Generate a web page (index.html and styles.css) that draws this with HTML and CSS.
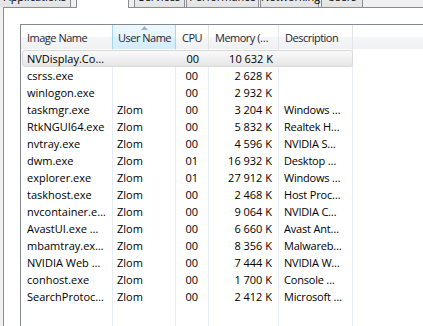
FILE: index.html
```html
<!DOCTYPE html>
<html lang="en">
<head>
    <meta charset="UTF-8">
    <meta name="viewport" content="width=device-width, initial-scale=1.0">
    <title>Windows Task Manager - Processes</title>
    <link rel="stylesheet" href="styles.css">
</head>
<body>
    <div class="tabs">
        <div class="tab tab-apps">Applications</div>
        <div class="tab tab-procs active">Processes</div>
        <div class="tab tab-services">Services</div>
        <div class="tab tab-perf">Performance</div>
        <div class="tab tab-net">Networking</div>
        <div class="tab tab-users">Users</div>
    </div>

    <div class="panel">
        <div class="list">
            <div class="list-head">
                <div class="col-head c-name">Image Name</div>
                <div class="col-head c-user sorted">
                    <svg class="sort-arrow" width="7" height="4" viewBox="0 0 7 4">
                        <path d="M0 4 L3.5 0 L7 4 Z" fill="#9fb3c9"/>
                    </svg>
                    User Name
                </div>
                <div class="col-head c-cpu">CPU</div>
                <div class="col-head c-mem">Memory (…</div>
                <div class="col-head c-desc">Description</div>
                <div class="col-head c-fill"></div>
            </div>

            <div class="list-body">
                <div class="row selected"><span>NVDisplay.Co…</span><span></span><span class="num">00</span><span class="num">10 632 K</span><span></span></div>
                <div class="row"><span>csrss.exe</span><span></span><span class="num">00</span><span class="num">2 628 K</span><span></span></div>
                <div class="row"><span>winlogon.exe</span><span></span><span class="num">00</span><span class="num">2 932 K</span><span></span></div>
                <div class="row"><span>taskmgr.exe</span><span>Zlom</span><span class="num">00</span><span class="num">3 204 K</span><span>Windows …</span></div>
                <div class="row"><span>RtkNGUI64.exe</span><span>Zlom</span><span class="num">00</span><span class="num">5 832 K</span><span>Realtek H…</span></div>
                <div class="row"><span>nvtray.exe</span><span>Zlom</span><span class="num">00</span><span class="num">4 596 K</span><span>NVIDIA S…</span></div>
                <div class="row"><span>dwm.exe</span><span>Zlom</span><span class="num">01</span><span class="num">16 932 K</span><span>Desktop …</span></div>
                <div class="row"><span>explorer.exe</span><span>Zlom</span><span class="num">01</span><span class="num">27 912 K</span><span>Windows …</span></div>
                <div class="row"><span>taskhost.exe</span><span>Zlom</span><span class="num">00</span><span class="num">2 468 K</span><span>Host Proc…</span></div>
                <div class="row"><span>nvcontainer.e…</span><span>Zlom</span><span class="num">00</span><span class="num">9 064 K</span><span>NVIDIA C…</span></div>
                <div class="row"><span>AvastUI.exe …</span><span>Zlom</span><span class="num">00</span><span class="num">6 660 K</span><span>Avast Ant…</span></div>
                <div class="row"><span>mbamtray.ex…</span><span>Zlom</span><span class="num">00</span><span class="num">8 356 K</span><span>Malwareb…</span></div>
                <div class="row"><span>NVIDIA Web …</span><span>Zlom</span><span class="num">00</span><span class="num">7 444 K</span><span>NVIDIA W…</span></div>
                <div class="row"><span>conhost.exe</span><span>Zlom</span><span class="num">00</span><span class="num">1 700 K</span><span>Console …</span></div>
                <div class="row"><span>SearchProtoc…</span><span>Zlom</span><span class="num">00</span><span class="num">2 412 K</span><span>Microsoft …</span></div>
            </div>
        </div>
    </div>
</body>
</html>
```

FILE: styles.css
```css
body {
    margin: 0;
    height: 326px;
    overflow: hidden;
    background-color: #f0f0f0;
    font-family: 'Open Sans', 'Noto Sans', sans-serif;
    font-size: 11px;
    color: #000;
}

/* tab strip, mostly scrolled off the top */
.tabs {
    display: flex;
    align-items: flex-end;
    height: 21px;
    margin-top: -14px;
}

.tab {
    box-sizing: border-box;
    height: 21px;
    line-height: 19px;
    text-align: center;
    border: 1px solid #898c95;
    border-bottom: none;
    border-radius: 2px 2px 0 0;
    background: linear-gradient(#f2f2f2, #e3e3e3);
}

.tab.active {
    position: relative;
    height: 23px;
    margin-bottom: -1px;
    background: #fff;
}

.tab-apps { width: 71px; margin-right: 5px; border-left: none; }
.tab-procs { width: 53px; margin-right: 5px; }
.tab-services { width: 51px; margin-right: 1px; }
.tab-perf { width: 73px; margin-right: 1px; }
.tab-net { width: 59px; margin-right: 2px; }
.tab-users { width: 42px; }

.panel {
    margin-left: 3px;
    width: 440px;
    height: 330px;
    box-sizing: border-box;
    padding: 16px 0 0 16px;
    background-color: #fff;
    border-top: 1px solid #898c95;
    border-left: 1px solid #898c95;
}

.list {
    height: 320px;
    border-top: 1px solid #828790;
    border-left: 1px solid #828790;
    background-color: #fff;
}

.list-head {
    display: grid;
    grid-template-columns: 92px 63px 33px 70px 74px 1fr;
    height: 24px;
    background: linear-gradient(#fff 0, #fff 50%, #f5f6f7 50%, #eff0f2 100%);
}

.col-head {
    position: relative;
    box-sizing: border-box;
    padding: 2px 0 0 6px;
    line-height: 22px;
    color: #1e2633;
    letter-spacing: -0.5px;
    white-space: nowrap;
    border-right: 1px solid #e2e4e8;
}

.col-head.c-fill {
    border-right: none;
}

.col-head.sorted {
    padding-left: 5px;
    border-right-color: #a5d7f4;
    box-shadow: -1px 0 0 #a5d7f4;
    background: linear-gradient(#edf7fd 0, #e7f5fd 50%, #dcf0fc 50%, #d5ecfb 100%);
}

.sort-arrow {
    position: absolute;
    top: 1px;
    left: 28px;
}

.list-body {
    height: 300px;
    padding-top: 1px;
    background-image: linear-gradient(to right,
        transparent 91px, #e8edf5 91px, #e8edf5 92px,
        transparent 92px, transparent 154px, #e8edf5 154px, #e8edf5 155px,
        transparent 155px, transparent 187px, #e8edf5 187px, #e8edf5 188px,
        transparent 188px, transparent 257px, #e8edf5 257px, #e8edf5 258px,
        transparent 258px, transparent 331px, #e8edf5 331px, #e8edf5 332px,
        transparent 332px);
}

.row {
    display: grid;
    grid-template-columns: 90px 63px 33px 70px 75px;
    width: 331px;
    height: 17px;
    margin-left: 1px;
    box-sizing: border-box;
    line-height: 17px;
}

.row span {
    white-space: nowrap;
    overflow: hidden;
}

.row span:nth-child(1) { padding-left: 5px; }
.row span:nth-child(2) { padding-left: 5px; }
.row span:nth-child(5) { padding-left: 6px; letter-spacing: -0.2px; }

.row .num {
    text-align: right;
}

.row span:nth-child(3) { padding-right: 10px; }
.row span:nth-child(4) { padding-right: 6px; }

.row.selected {
    line-height: 15px;
    border: 1px solid #d9d9d9;
    border-radius: 3px;
    background: linear-gradient(#fafafa, #e6e6e6);
}

.row.selected span:nth-child(1) { padding-left: 4px; }
```
